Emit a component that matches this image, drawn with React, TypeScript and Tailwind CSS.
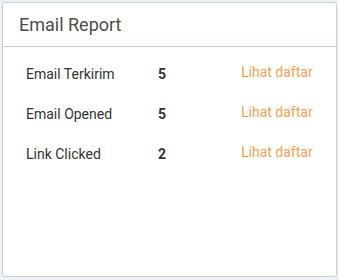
const rows = [
  { label: "Email Terkirim", count: 5 },
  { label: "Email Opened", count: 5 },
  { label: "Link Clicked", count: 2 },
];

export default function App() {
  return (
    <div className="w-[339px] h-[280px] bg-[#eef1f5] p-[2px] font-['Roboto',sans-serif]">
      <div className="h-[275px] w-[335px] bg-white border border-[#c5d2d8] rounded-[3px] flex flex-col">
        <div className="h-[44px] border-b border-[#c5d2d8] flex items-center px-[16px]">
          <h2 className="text-[18px] text-[#4d4d4d]">Email Report</h2>
        </div>
        <div className="flex flex-col pt-[7px] px-[23px]">
          {rows.map((r) => (
            <div key={r.label} className="h-[40px] flex items-center text-[14px]">
              <span className="w-[132px] text-[#333]">{r.label}</span>
              <span className="w-[83px] font-bold text-[#333]">{r.count}</span>
              <a className="text-[#f7a04d] cursor-pointer mb-[3px]">Lihat daftar</a>
            </div>
          ))}
        </div>
      </div>
    </div>
  );
}
